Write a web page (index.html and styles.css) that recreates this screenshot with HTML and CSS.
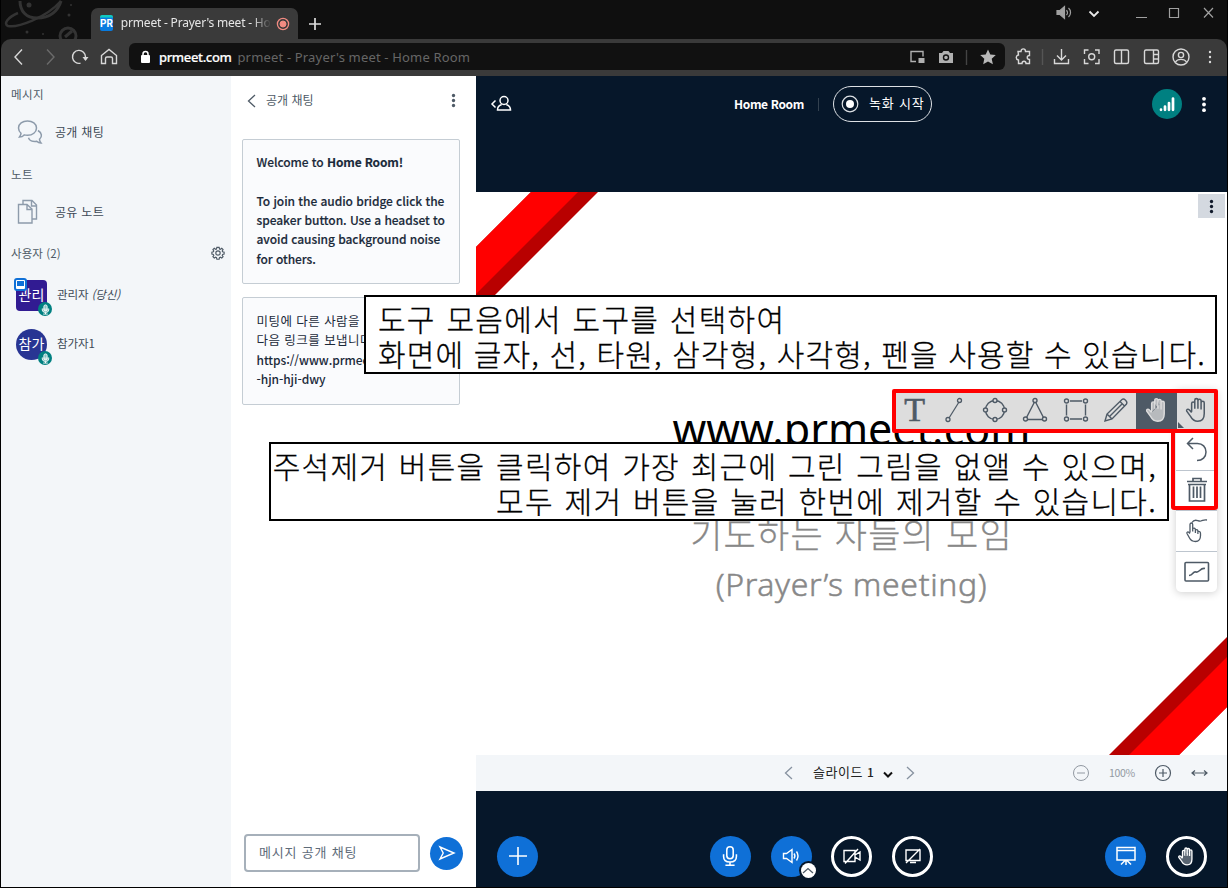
FILE: index.html
```html
<!DOCTYPE html>
<html lang="ko">
<head>
<meta charset="utf-8">
<title>prmeet - Prayer's meet - Home Room</title>
<link rel="stylesheet" href="styles.css">
</head>
<body>
<svg class="defs" width="0" height="0">
  <symbol id="hand" viewBox="0 0 24 24"><path d="M7.4 13.5V6.4a1.35 1.35 0 0 1 2.7 0V11M10.1 6.4V3.6a1.35 1.35 0 0 1 2.7 0V11M12.8 4.2a1.35 1.35 0 0 1 2.7 0v7.3M15.5 5.8a1.35 1.35 0 0 1 2.7 0v9.4c0 4-2.2 6.4-5.6 6.4-3 0-4.700-1.400-6-3.900L3.200 13c-.6-1.300 1-2.300 2.100-1.200l2.100 2.300"/></symbol>
  <symbol id="dots" viewBox="0 0 6 18"><circle cx="3" cy="3" r="2"/><circle cx="3" cy="9" r="2"/><circle cx="3" cy="15" r="2"/></symbol>
  <symbol id="mic" viewBox="0 0 24 24"><rect x="8.500" y="2" width="7" height="13" rx="3.500"/><path d="M5 10v2.500c0 4 3 6 7 6s7-2 7-6V10M12 18.500V22M7 22h10"/></symbol>
</svg>
<div class="window">
  <header class="tabbar">
    <svg class="doodle" width="90" height="39" viewBox="0 0 90 39"><g fill="none" stroke="#333" stroke-width="3"><path d="M19 1c0 10 6 17 17 17 13 0 21-7 24-17"/><path d="M17 13C7 17 2 24 7 26c9 2 38-8 53-25" stroke-width="2.500"/><circle cx="67" cy="36" r="8"/><path d="M64 37l7-6"/></g><g fill="#333"><circle cx="28" cy="5" r="2.500"/><circle cx="68" cy="15" r="1.500"/><circle cx="26" cy="32" r="1.500"/><circle cx="42" cy="34" r="1"/><circle cx="70" cy="5" r="1"/></g></svg>
    <div class="tab">
      <span class="favicon">PR</span><span class="tab-title">prmeet - Prayer's meet - Ho</span>
      <svg width="14" height="14" viewBox="0 0 14 14" fill="none" stroke="#f28b82"><circle cx="7" cy="7" r="5.600" stroke-width="1.300"/><circle cx="7" cy="7" r="3" fill="#f28b82"/></svg>
    </div>
    <svg class="newtab" width="12" height="12" viewBox="0 0 12 12" stroke="#ddd" stroke-width="1.700"><path d="M6 0v12M0 6h12"/></svg>
    <svg class="winctl" width="160" height="20" viewBox="0 0 160 20" fill="none" stroke="#a0a0a0" stroke-width="1.200"><path d="M2 7.500h3l4.500-4v12L5 11.500H2z" fill="#a0a0a0"/><path d="M11.500 7a4 4 0 0 1 0 5M13.500 5a6 6 0 0 1 0 9"/><path d="M34.500 8.500l4.500 4.500 4.500-4.500" stroke="#e8e8e8" stroke-width="1.800"/><path d="M81 14.500h11M114.500 5.500h9v9h-9zM149 5l9 9.500M158 5l-9 9.500"/></svg>
  </header>
  <nav class="toolbar">
    <svg class="nav-icons" width="120" height="22" viewBox="0 0 120 22" fill="none" stroke="#d8d8d8" stroke-width="1.400"><path d="M21 3.500l-7 7.500 7 7.500"/><path d="M46 3.500l7 7.500-7 7.500" stroke="#6b6b6b"/><path d="M79.500 17.200a6.500 6.500 0 1 1 5-6.200v3"/><path d="M81.500 11h6l-3 4z" fill="#d8d8d8" stroke="none"/><path d="M100.500 9.500l7.500-6 7.500 6v8h-4v-5a1.500 1.500 0 0 0-1.500-1.500h-4a1.500 1.500 0 0 0-1.500 1.500v5h-4z"/></svg>
    <div class="address">
      <svg width="11" height="14" viewBox="0 0 11 14"><rect x="1" y="5" width="9" height="8" rx="1" fill="#fff"/><path d="M3 6V4a2.500 2.500 0 0 1 5 0v2" fill="none" stroke="#fff" stroke-width="1.500"/></svg>
      <b>prmeet.com</b><span class="page-name">prmeet - Prayer's meet - Home Room</span>
      <svg class="address-icons" width="92" height="20" viewBox="0 0 92 20" fill="none" stroke="#b0b0b0" stroke-width="1.400"><path d="M7 14.500H2V4.500h12v5"/><path d="M9.500 11h6v5h-6z" fill="#b0b0b0" stroke="none"/><path fill="#b0b0b0" stroke="none" d="M30 6h3l1.500-2h5L41 6h3v10H30z"/><circle cx="37" cy="10.500" r="2.500" stroke="#111"/><path d="M57.500 3v15" stroke="#444"/><path fill="#b8b8b8" stroke="none" d="M79 2.500l2.300 5 5.500.6-4.100 3.700 1.200 5.400-4.900-2.800-4.800 2.800 1.100-5.400-4.100-3.700 5.500-.6z"/></svg>
    </div>
    <svg class="ext-icons" width="212" height="22" viewBox="0 0 212 22" fill="none" stroke="#d8d8d8" stroke-width="1.400"><path d="M5 5.500h3c0-3.500 4.500-3.500 4.500 0h4v4c-3 0-3 4 0 4v4H13c0-3-4-3-4 0H5.500v-3.500c-3-.5-3-4.500 0-5z"/><path d="M29.500 3v16" stroke="#555"/><path d="M48.500 3v10.500M44 9.500l4.500 4.500 4.500-4.500M41.500 13v4.500h14V13"/><path d="M75.500 4H71.500v4M82 4h4v4M71.500 13v4.500h4M82 17.500h4V13"/><circle cx="78.700" cy="10.800" r="3"/><rect x="101.500" y="4" width="14" height="13.500" rx="1.500"/><path d="M108.500 4v13.500"/><rect x="131.500" y="4" width="14" height="13.500" rx="1.500"/><path d="M140.500 4v13.500M140.500 8.500h5M140.500 13h5"/><circle cx="168" cy="11" r="8"/><circle cx="168" cy="9" r="2.600"/><path d="M162.500 16c2-3.500 9-3.500 11 0"/><g fill="#ddd" stroke="none"><circle cx="197" cy="6" r="1.200"/><circle cx="197" cy="11" r="1.200"/><circle cx="197" cy="16" r="1.200"/></g></svg>
  </nav>
  <main class="app">
    <aside class="sidebar">
      <h2>메시지</h2>
      <div class="row"><svg width="26" height="26" viewBox="0 0 26 26" fill="none" stroke="#8d9bab" stroke-width="1.500"><path d="M4 14.300A7.500 7.500 0 0 1 1.500 9C1.500 4.800 5.500 2 10.500 2s9 2.800 9 7-4 7.300-9 7.300c-1.300 0-2.300-.1-3.300-.4C6 17.200 4.500 18 2.500 18c1-1.200 1.500-2.300 1.500-3.700z"/><path d="M21 11.500c4 2.500 4.500 6 1.500 8.700 0 1.500.6 2.700 1.500 3.800-1.800 0-3.300-.7-4.300-1.700-4.200.6-7.500-1-8.200-3.600"/></svg><span>공개 채팅</span></div>
      <h2 class="notes">노트</h2>
      <div class="row"><svg width="26" height="26" viewBox="0 0 26 26" fill="none" stroke="#8d9bab" stroke-width="1.400"><path d="M6 5V1.500h9l4.500 4.500V20H15M14.500 1.500V7h5"/><path d="M1.500 5.500h8.500L15 10v14H1.500zM10 5.500V10.500h5"/></svg><span>공유 노트</span></div>
      <div class="users-head"><h2>사용자 (2)</h2><svg width="14" height="14" viewBox="0 0 16 16" fill="none" stroke="#4e5a66" stroke-width="1.300"><circle cx="8" cy="8" r="2.500"/><path d="M6.700 1.500h2.600l.4 1.900 1 .4L12.300 2.600l1.500 1.500-1 1.600.5 1 1.700.3v2.300l-1.700.4-.5 1 1 1.600-1.500 1.500-1.600-1-1 .4-.4 1.900H6.700l-.4-1.900-1-.4-1.600 1-1.500-1.500 1-1.600-.5-1-1.700-.4V7l1.700-.3.500-1-1-1.600 1.500-1.500 1.600 1.200 1-.4z"/></svg></div>
      <div class="user"><div class="avatar presenter">관리<i class="screen-badge"></i><i class="mic-badge"><svg width="11" height="11" stroke="#fff" stroke-width="2" fill="#fff8"><use href="#mic"/></svg></i></div><span>관리자 <em>(당신)</em></span></div>
      <div class="user"><div class="avatar">참가<i class="mic-badge"><svg width="11" height="11" stroke="#fff" stroke-width="2" fill="#fff8"><use href="#mic"/></svg></i></div><span>참가자1</span></div>
    </aside>
    <section class="chat">
      <div class="chat-head"><svg width="9" height="14" viewBox="0 0 9 14" fill="none" stroke="#4e5a66" stroke-width="1.300"><path d="M8 1L1.500 7 8 13"/></svg><span>공개 채팅</span><svg class="more" width="5" height="15" fill="#4e5a66"><use href="#dots"/></svg></div>
      <div class="message welcome"><p>Welcome to <b>Home Room!</b></p><p>To join the audio bridge click the<br>speaker button. Use a headset to<br>avoid causing background noise<br>for others.</p></div>
      <div class="message invite"><p><span class="ko">미팅에 다른 사람을 초대하려면</span><br><span class="ko">다음 링크를 보냅니다:</span><br>https://www.prmeet.com/b<br>-hjn-hji-dwy</p></div>
      <div class="compose"><div class="input">메시지 공개 채팅</div><div class="send"><svg width="18" height="16" viewBox="0 0 18 16" fill="none" stroke="#fff" stroke-width="1.400"><path d="M2 2L16 8 2 14 5.200 8z"/></svg></div></div>
    </section>
    <section class="media">
      <div class="room-bar">
        <svg width="22" height="18" viewBox="0 0 22 18" fill="none" stroke="#fff" stroke-width="1.500"><path d="M5.500 5.500L2 9l3.500 3.500"/><circle cx="14" cy="5.500" r="4"/><path d="M11.700 9.500C8.500 10.500 7.500 12 7.500 15h13c0-3-1-4.500-4.200-5.500"/></svg>
        <b>Home Room</b><i class="sep"></i>
        <div class="record"><svg width="18" height="18" viewBox="0 0 18 18"><circle cx="9" cy="9" r="7.800" fill="none" stroke="#dde1e5" stroke-width="1.200"/><circle cx="9" cy="9" r="4" fill="#fff"/></svg><span>녹화 시작</span></div>
        <div class="signal"><svg width="16" height="16" viewBox="0 0 16 16" stroke="#fff" stroke-width="2.700" stroke-linecap="round"><path d="M2 13.700v.1M6 10.500v3.300M10 7v6.800M14 2.500v11.300"/></svg></div>
        <svg class="more" width="6" height="17" fill="#fff"><use href="#dots"/></svg>
      </div>
      <div class="slide">
        <svg class="ribbons" width="751" height="563" viewBox="0 0 751 563"><path fill="#b80000" d="M55 0h67L19 103H0V55z"/><path fill="#f00" d="M0 55L55 0h47L0 102z"/><path fill="#b80000" d="M633 563L751 445v70l-48 48z"/><path fill="#f00" d="M653 563L751 465v50l-48 48z"/></svg>
        <div class="slide-copy"><div class="site">www.prmeet.com</div><div class="sub">기도하는 자들의 모임</div><div class="eng">(Prayer’s meeting)</div></div>
        <div class="slide-menu"><svg width="5" height="15" fill="#10192a"><use href="#dots"/></svg></div>
      </div>
      <div class="slide-nav">
        <svg width="9" height="14" viewBox="0 0 9 14" fill="none" stroke="#8792a0" stroke-width="1.300"><path d="M8 1L1.500 7 8 13"/></svg>
        <span class="slide-no">슬라이드 <small>1</small></span><svg class="caret" width="10" height="7" viewBox="0 0 10 7" fill="none" stroke="#111" stroke-width="2"><path d="M1 1.500l4 4 4-4"/></svg>
        <svg width="9" height="14" viewBox="0 0 9 14" fill="none" stroke="#8792a0" stroke-width="1.300"><path d="M1 1l6.500 6L1 13"/></svg>
        <div class="zoom"><svg width="18" height="18" viewBox="0 0 18 18" fill="none" stroke="#9299a2"><circle cx="9" cy="9" r="7.500"/><path d="M5 9h8"/></svg><span>100%</span><svg width="18" height="18" viewBox="0 0 18 18" fill="none" stroke="#4e5a66" stroke-width="1.200"><circle cx="9" cy="9" r="7.500"/><path d="M5 9h8M9 5v8"/></svg><svg class="fit" width="17" height="8" viewBox="0 0 17 8" fill="none" stroke="#4e5a66" stroke-width="1.200"><path d="M1 4h15M4 1.500L1 4l3 2.500M13 1.500l3 2.500-3 2.500"/></svg></div>
      </div>
      <footer class="actions">
        <div class="btn blue plus"><svg width="20" height="20" viewBox="0 0 20 20" stroke="#fff" stroke-width="1.600"><path d="M10 1v18M1 10h18"/></svg></div>
        <div class="btn blue"><svg width="22" height="22" fill="none" stroke="#fff" stroke-width="1.700"><use href="#mic"/></svg></div>
        <div class="btn blue"><svg width="18" height="18" viewBox="0 0 18 18" fill="none" stroke="#fff" stroke-width="1.400"><path d="M1.500 6.500h3L10 2.500v13L4.500 11.500h-3zM12 6.500q1.800 2.500 0 5M14.500 4.500q3 4.500 0 9"/></svg><i class="up"><svg width="12" height="7" viewBox="0 0 12 7" fill="none" stroke="#4e5a66" stroke-width="1.300"><path d="M1 6l5-4.500L11 6"/></svg></i></div>
        <div class="btn ring"><svg width="20" height="18" viewBox="0 0 20 18" fill="none" stroke="#fff" stroke-width="1.400"><path d="M2 3.500h11v11H2zM13 8l5-3v8l-5-3M3 16.500L16 2"/></svg></div>
        <div class="btn ring"><svg width="18" height="18" viewBox="0 0 18 18" fill="none" stroke="#fff" stroke-width="1.400"><path d="M2 3h14v10.500H2zM6 15.500h6M2 16L16 2"/></svg></div>
        <div class="btn blue present"><svg width="22" height="22" viewBox="0 0 22 22" fill="none" stroke="#fff" stroke-width="1.500"><path d="M2 2.500h18v12.500H2zM2 5.500h18M11 15v5M10 15.500l-4 4M12 15.500l4 4"/></svg></div>
        <div class="btn ring raise"><svg width="21" height="21" fill="#fff5" stroke="#fff" stroke-width="1.500"><use href="#hand"/></svg></div>
      </footer>
    </section>
  </main>

  <div class="tool-column">
    <div class="tool"></div>
    <div class="tool"><svg width="24" height="26" viewBox="0 0 24 26" fill="none" stroke="#4e5a66" stroke-width="1.500"><path d="M8 1L2.500 6.500 8 12M2.500 6.500h10c5 0 8.500 3.500 8.500 8.500s-3.500 8.500-9 8.500"/></svg></div>
    <div class="tool"><svg width="24" height="26" viewBox="0 0 24 26" fill="none" stroke="#4e5a66" stroke-width="1.700"><path d="M2 4.500h20M8 4V1.500h8V4M3 7.500h18M4.500 8v16h15V8M8.500 9.500V21M12 9.500V21M15.500 9.500V21"/></svg></div>
    <div class="tool"><svg width="26" height="28" viewBox="0 0 26 28" fill="none" stroke="#4e5a66" stroke-width="1.300"><path d="M6 15.500V7.500c0-2 2.700-2 2.700 0v7M8.700 11.500q2.700-1 2.700 1.500V16M11.400 13q2.500-1 2.500 1.500V17M13.900 14.500q2.600-.5 2.600 2v2c0 4-2 6-5 6-3.500 0-5-1.500-6-3.500L3 16.500c-.5-1.500 1-2 2-1l1 1"/><path d="M8 5.500c3-5 6-.5 9-1.500s3-1.500 6-1"/></svg></div>
    <div class="tool"><svg width="26" height="22" viewBox="0 0 26 22" fill="none" stroke="#4e5a66" stroke-width="1.600"><rect x="1" y="1.500" width="23.500" height="18.500" rx="1"/><path d="M5 14.500c4.500 0 3.500-4.500 7-3.500s4-4.500 9-3.500"/></svg></div>
  </div>
  <div class="undo-frame"></div>
  <div class="tool-strip">
    <div class="tool letter">T</div>
    <div class="tool"><svg width="24" height="26" viewBox="0 0 24 26" fill="none" stroke="#4e5a66" stroke-width="1.300"><path d="M7 21L17 5"/><circle cx="6" cy="22.500" r="2"/><circle cx="17.500" cy="3.500" r="2"/></svg></div>
    <div class="tool"><svg width="26" height="26" viewBox="0 0 26 26" fill="none" stroke="#4e5a66" stroke-width="1.400"><circle cx="13" cy="13" r="9.500"/><g fill="#ddd"><circle cx="13" cy="3.500" r="2"/><circle cx="13" cy="22.500" r="2"/><circle cx="3.500" cy="13" r="2"/><circle cx="22.500" cy="13" r="2"/></g></svg></div>
    <div class="tool"><svg width="26" height="26" viewBox="0 0 26 26" fill="none" stroke="#4e5a66" stroke-width="1.400"><path d="M13 4L3.500 22.500h19z"/><g fill="#ddd"><circle cx="13" cy="3.500" r="2"/><circle cx="3.500" cy="22" r="2"/><circle cx="22.500" cy="22" r="2"/></g></svg></div>
    <div class="tool"><svg width="26" height="26" viewBox="0 0 26 26" fill="none" stroke="#4e5a66" stroke-width="1.400"><path d="M3.500 4h19v18h-19z"/><g fill="#ddd" stroke="#ddd" stroke-width="5"><circle cx="3.500" cy="4" r="1"/><circle cx="22.500" cy="4" r="1"/><circle cx="3.500" cy="22" r="1"/><circle cx="22.500" cy="22" r="1"/></g><g fill="#ddd"><circle cx="3.500" cy="4" r="2"/><circle cx="22.500" cy="4" r="2"/><circle cx="3.500" cy="22" r="2"/><circle cx="22.500" cy="22" r="2"/></g></svg></div>
    <div class="tool"><svg width="26" height="26" viewBox="0 0 26 26" fill="none" stroke="#4e5a66" stroke-width="1.400"><path d="M2 24l2-7L19 2.500c2-1.500 6 2 4.500 4.500L9 22zM4 17l5 5M17 4.500l5 5M7 19L19.500 6.500"/></svg></div>
    <div class="tool active"><svg width="28" height="28" fill="#dddb" stroke="#ddd" stroke-width="1.200"><use href="#hand"/></svg></div>
    <div class="tool"><svg width="28" height="28" fill="none" stroke="#4e5a66" stroke-width="1.300"><use href="#hand"/></svg><i class="corner"></i></div>
  </div>
  <div class="note note-top"><span>도구 모음에서 도구를 선택하여</span><br><span class="tools-line">화면에 글자, 선, 타원, 삼각형, 사각형, 펜을 사용할 수 있습니다.</span></div>
  <div class="note note-bottom"><span>주석제거 버튼을 클릭하여 가장 최근에 그린 그림을 없앨 수 있으며,</span><br><span>모두 제거 버튼을 눌러 한번에 제거할 수 있습니다.</span></div>
</div>
</body>
</html>
```
FILE: styles.css
```css
* { box-sizing: border-box; }
body { margin: 0; font-family: "Noto Sans CJK KR", sans-serif; }
svg { display: block; flex: none; overflow: visible; }
i { font-style: normal; }
.defs { position: absolute; }
.window { position: relative; width: 1228px; height: 888px; overflow: hidden; display: flex; flex-direction: column; background: #0f0f0f; border: 1px solid #000; border-top: 0; }

/* Browser chrome */
.tabbar { height: 39px; flex: none; display: flex; align-items: flex-start; font-family: "Noto Sans", sans-serif; }
.tab { width: 207px; height: 31px; margin-top: 8px; background: #3a3a3a; border-radius: 7px 7px 0 0; display: flex; align-items: center; padding: 0 9px; }
.favicon { width: 16px; height: 16px; margin: -2px 8px 0 0; border-radius: 2px; background: linear-gradient(#10c9c0 12%, #087be0 20%); color: #fff; font: bold 10px/17px Roboto, sans-serif; text-align: center; }
.tab-title { width: 150px; margin: -2px 5px 0 0; white-space: nowrap; color: #e6e6e6; font-size: 12px; letter-spacing: -.2px; -webkit-mask-image: linear-gradient(90deg, #000 88%, transparent); }
.newtab { margin: 18px 0 0 11px; }
.winctl { margin: 3px 12px 0 auto; }
.toolbar { height: 37px; flex: none; display: flex; align-items: center; background: #3a3a3a; border-radius: 10px 10px 0 0; padding-bottom: 2px; }
.nav-icons { margin: 1px 8px 0 0; }
.address { width: 876px; height: 27px; flex: none; display: flex; align-items: center; border-radius: 6px; background: #111; padding-left: 11px; font: 13px "Noto Sans", sans-serif; }
.address b { margin: 0 6px 0 8px; font-weight: 500; color: #fff; letter-spacing: -.35px; -webkit-text-stroke: .2px; }
.page-name { color: #666; letter-spacing: .17px; }
.address-icons { margin-left: auto; margin-right: 4px; }
.ext-icons { margin-left: 8px; }

.app { flex: 1; display: flex; min-height: 0; }

/* User list */
.sidebar { width: 230px; background: #f3f6f9; color: #3d4956; font-size: 12px; padding-top: 9px; }
.sidebar h2 { margin: 0 0 0 10px; font-size: 11.500px; line-height: 18px; font-weight: 400; letter-spacing: .4px; color: #4e5a66; }
.row { display: flex; align-items: center; gap: 12px; height: 34px; margin: 12px 0 0 16px; font-size: 12px; letter-spacing: .3px; }
.sidebar .notes { margin-top: 16px; }
.notes + .row { margin-top: 12px; }
.row span { margin-top: -1px; }
.users-head { display: flex; align-items: center; margin-top: 16px; padding-right: 6px; height: 16px; justify-content: space-between; }
.users-head h2 { letter-spacing: .1px; }
.user { display: flex; align-items: center; gap: 10px; height: 49px; padding-left: 15px; font-size: 11.500px; }
.user > span { margin-top: -3px; letter-spacing: -.1px; }
.users-head + .user { margin-top: 10px; }
.avatar { position: relative; width: 31px; height: 31px; border-radius: 50%; background: #283593; color: #fff; text-align: center; font-size: 14px; line-height: 28px; white-space: nowrap; }
.avatar.presenter { border-radius: 4px; background: #311b92; }
.mic-badge { position: absolute; right: -5px; bottom: -5px; width: 14px; height: 14px; border-radius: 50%; background: #008081; display: grid; place-items: center; }
.screen-badge { position: absolute; left: -2px; top: -2px; width: 13px; height: 13px; border-radius: 3px; border: 2px solid #0f70d7; background: #fff; }
.screen-badge::after { content: ""; display: block; margin: 1px; height: 5px; background: #0f70d7; }

/* Chat */
.chat { width: 245px; background: #fff; padding: 9px 13px 15px 11px; display: flex; flex-direction: column; color: #1b2a3a; }
.chat-head { display: flex; align-items: center; height: 30px; font-size: 12px; color: #4e5a66; padding: 1px 7px 0 5px; gap: 10px; margin-bottom: 24px; }
.chat-head span { margin-top: -2px; }
.chat-head .more { margin-left: auto; }
.message { width: 218px; border: 1px solid #c5cdd4; border-radius: 2px; background: #fafbfd; padding: 12.400px 13px 0 13.500px; font-size: 12px; line-height: 19.300px; font-weight: 500; letter-spacing: -.06px; white-space: nowrap; }
.message p { margin: 0 0 19px; }
.message b { letter-spacing: -.15px; }
.welcome { height: 145px; margin-bottom: 13px; -webkit-text-stroke: .15px; }
.invite { height: 108px; padding-top: 13px; }
.ko { letter-spacing: .45px; font-weight: 400; font-size: 12.500px; line-height: 19px; }
.compose { margin-top: auto; display: flex; align-items: center; gap: 10px; padding-left: 2px; }
.input { width: 176px; height: 38px; flex: none; border: 2px solid #a6b0ba; border-radius: 4px; padding-left: 13px; font-size: 13px; line-height: 32px; color: #5e6b79; letter-spacing: .8px; }
.send { width: 33px; height: 33px; flex: none; border-radius: 50%; background: #0f70d7; display: grid; place-items: center; }

/* Meeting */
.media { width: 751px; display: flex; flex-direction: column; background: #06172a; }
.room-bar { height: 116px; flex: none; display: flex; align-items: center; padding: 0 0 60px 14px; color: #fff; font-size: 12.500px; }
.room-bar b { width: 71px; margin: -2px 0 0 222px; white-space: nowrap; font-size: 12px; letter-spacing: -.35px; }
.sep { width: 1px; height: 13px; margin: 0 14px 0 13px; background: #33414f; }
.record { width: 99px; height: 36px; border: 1px solid #dde1e5; border-radius: 18px; display: flex; align-items: center; gap: 10px; padding-left: 7px; white-space: nowrap; font-size: 13px; line-height: 30px; letter-spacing: .8px; }
.record span { margin-top: -2px; }
.signal { width: 30px; height: 30px; margin-left: auto; border-radius: 50%; background: #008081; display: grid; place-items: center; }
.room-bar .more { margin: 0 20px 0 19px; }
.slide { position: relative; height: 563px; flex: none; background: #fff; overflow: hidden; }
.ribbons { position: absolute; inset: 0; }
.slide-copy { position: absolute; inset: 208px 0 0; text-align: center; color: #888; white-space: nowrap; }
.site { color: #000; font: 43px/58px "Noto Sans", sans-serif; }
.sub { font-size: 35px; letter-spacing: 1.200px; font-weight: 300; line-height: 48px; margin-top: 51px; -webkit-text-stroke: .3px; }
.eng { font: 300 32px/48px "Noto Sans", sans-serif; letter-spacing: .65px; margin-top: 3px; -webkit-text-stroke: .5px; }
.slide-menu { position: absolute; right: 2px; top: 2px; width: 27px; height: 24px; background: #d4d9e0; display: grid; place-items: center; }
.slide-nav { height: 36px; flex: none; display: flex; align-items: center; background: #f3f6f9; padding-left: 308px; font-size: 13px; color: #222; }
.slide-no { width: 65px; margin: -3px 0 0 20px; white-space: nowrap; letter-spacing: .5px; }
.slide-no small { font-size: 12px; font-weight: 500; }
.caret { margin: 2px 13px 0 5px; }
.zoom { display: flex; align-items: center; margin-left: auto; padding-right: 19px; color: #9299a2; font-size: 10.500px; }
.zoom span { width: 27px; margin: -2px 18px 0 19px; white-space: nowrap; letter-spacing: -.3px; }
.fit { margin-left: 19px; }
.actions { flex: 1; display: flex; align-items: center; gap: 19.700px; padding: 34px 0 0 21px; }
.btn { position: relative; width: 41px; height: 41px; flex: none; border-radius: 50%; display: grid; place-items: center; }
.blue { background: #0f70d7; }
.ring { border: 3px solid #fff; }
.plus { margin-right: 152.300px; }
.present { margin-left: 152.300px; }
.up { position: absolute; right: -4px; bottom: -1px; width: 15px; height: 15px; border-radius: 50%; background: #fff; box-shadow: 0 0 0 2px #06172a; display: grid; place-items: center; }

/* Whiteboard tools floating over the slide */
.tool { position: relative; flex: none; display: grid; place-items: center; }
.tool-column { position: absolute; left: 1175px; top: 390px; width: 41px; border-radius: 0 0 5px 5px; background: #fff; box-shadow: 0 1px 8px #0003; }
.tool-column .tool { width: 41px; height: 40.400px; border-bottom: 1px solid #bdc5ce; }
.tool-column .tool:last-child { border: 0; }
.undo-frame { position: absolute; left: 1170px; top: 429px; width: 47px; height: 81px; border: 4px solid #f00; border-radius: 3px; }
.tool-strip { position: absolute; left: 891px; top: 389px; width: 326px; height: 44px; border: 4px solid #f00; border-radius: 2px; background: #ddd; display: flex; overflow: hidden; }
.tool-strip .tool { height: 34px; width: 40.500px; }
.tool-strip .tool:first-child { width: 37.500px; }
.tool-strip .tool.active { height: 36px; padding-bottom: 2px; }
.tool-strip .tool svg { margin-left: 1px; }
.tool-strip .letter { font: 34px/34px "Liberation Serif", serif; color: #4e5a66; -webkit-text-stroke: .6px; }
.active { background: #4e5a66; }
.corner { position: absolute; left: 1px; bottom: -1px; border: 3.500px solid; border-color: transparent transparent #4e5a66 #4e5a66; }

/* Captions */
.note { position: absolute; background: #fff; border: 2px solid #000; color: #000; font-size: 30px; line-height: 35px; font-weight: 300; white-space: nowrap; letter-spacing: 1.270px; word-spacing: 1px; -webkit-text-stroke: .3px; }
.note-top { left: 363px; top: 295px; width: 853px; height: 79px; padding: 4px 0 0 12px; }
.tools-line { letter-spacing: 1.150px; word-spacing: 0; }
.note-bottom { left: 268px; top: 442px; width: 900px; height: 79px; padding: 4px 10px 0 0; text-align: right; }
```
